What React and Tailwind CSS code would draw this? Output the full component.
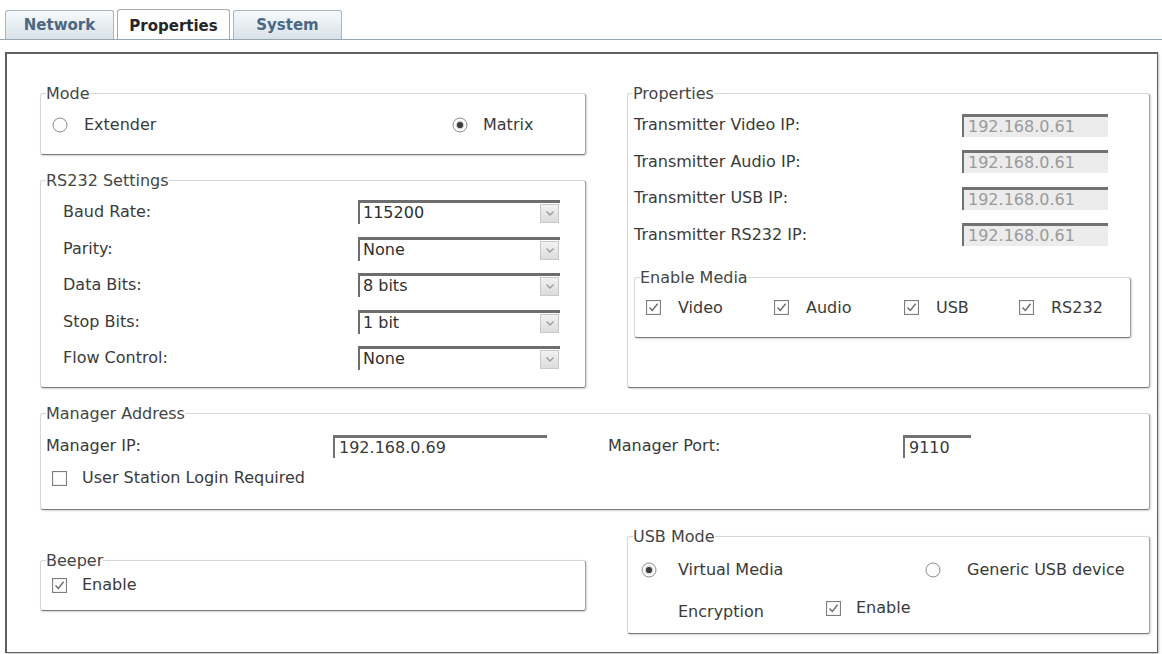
import React from "react";

const font = "font-['DejaVu_Sans',Verdana,sans-serif]";

function Group({ title, className = "", children }) {
  return (
    <fieldset
      className={`border border-[#d6d6d6] border-r-[#a2a2a2] border-b-[#7c7c7c] rounded-[3px] shadow-[1px_1px_2px_rgba(0,0,0,0.18)] ${className}`}
    >
      <legend className="ml-[5px] leading-[19px] text-[#454545]">{title}</legend>
      {children}
    </fieldset>
  );
}

function Radio({ checked }) {
  return (
    <svg width="16" height="16" viewBox="0 0 16 16" className="shrink-0">
      <circle cx="8" cy="8" r="7" fill="#fdfdfd" stroke="#8c8c8c" strokeWidth="1" />
      {checked && <circle cx="8" cy="8" r="4.4" fill="#d9d9d9" />}
      {checked && <circle cx="8" cy="8" r="3.1" fill="#3d3d3d" />}
    </svg>
  );
}

function Check({ checked }) {
  return (
    <svg width="15" height="15" viewBox="0 0 15 15" className="shrink-0">
      <rect x="0.5" y="0.5" width="14" height="14" fill="#fff" stroke="#7e7e7e" strokeWidth="1.2" />
      {checked && (
        <path d="M3.5 7.5 L6.3 10.5 L11.6 3.8" fill="none" stroke="#6a6a6a" strokeWidth="1.4" />
      )}
    </svg>
  );
}

function Select({ value }) {
  return (
    <div className="flex h-[24px] w-[202px] items-stretch border-t-[3px] border-l-2 border-[#6e6e6e] bg-white">
      <span className="flex-1 pl-[3px] leading-[20px] text-[#2f2f2f]">{value}</span>
      <span className="my-[1px] mr-[1px] flex w-[19px] items-center justify-center border border-[#c8c8c8] bg-linear-to-b from-[#f2f2f2] to-[#dcdcdc]">
        <svg width="10" height="7" viewBox="0 0 10 7">
          <path d="M1.5 1.5 L5 5 L8.5 1.5" fill="none" stroke="#9a9a9a" strokeWidth="1.3" />
        </svg>
      </span>
    </div>
  );
}

function IpBox({ value, className = "", muted }) {
  return (
    <div
      className={`h-[23px] border-t-[3px] border-l-2 border-[#727272] pl-[4px] leading-[20px] ${
        muted ? "bg-[#ececec] text-[#9a9a9a]" : "bg-white text-[#3a3a3a]"
      } ${className}`}
    >
      {value}
    </div>
  );
}

const rsRows = [
  ["Baud Rate:", "115200"],
  ["Parity:", "None"],
  ["Data Bits:", "8 bits"],
  ["Stop Bits:", "1 bit"],
  ["Flow Control:", "None"],
];

const txRows = ["Video", "Audio", "USB", "RS232"];

export default function App() {
  return (
    <div className={`${font} h-[654px] w-[1162px] overflow-hidden bg-white pt-[10px] text-[16px] text-[#3a3a3a]`}>
      {/* tab strip */}
      <div className="flex h-[30px] items-end gap-[3px] border-b border-[#97a6b0] pl-[5px]">
        <div className="flex h-[29px] w-[109px] items-center justify-center rounded-t-[3px] border border-b-0 border-[#a8b6bf] bg-linear-to-b from-[#f7fafc] to-[#d8e2e9] pt-[1px] text-[15px] font-bold text-[#4c6782]">
          Network
        </div>
        <div className="flex h-[30px] w-[113px] items-center justify-center rounded-t-[3px] border border-b-0 border-[#a9a9a9] bg-white pt-[3px] text-[15px] font-bold text-[#262626]">
          Properties
        </div>
        <div className="flex h-[29px] w-[109px] items-center justify-center rounded-t-[3px] border border-b-0 border-[#a8b6bf] bg-linear-to-b from-[#f7fafc] to-[#d8e2e9] pt-[1px] text-[15px] font-bold text-[#4c6782]">
          System
        </div>
      </div>

      {/* properties page */}
      <div className="ml-[5px] mt-[12px] h-[601px] w-[1153px] border-t-2 border-l-2 border-r border-b border-[#5f5f5f] pl-[33px] pr-[7px] pt-[30px] shadow-[1px_1px_2px_rgba(0,0,0,0.25)]">
        <div className="grid grid-cols-[546px_523px] gap-x-[41px]">
          <div className="flex flex-col gap-[16px]">
            <Group title="Mode" className="h-[71px]">
              <div className="grid grid-cols-[400px_auto] pl-[11px] pt-[12px]">
                <div className="flex h-[20px] items-center">
                  <Radio />
                  <span className="ml-[16px]">Extender</span>
                </div>
                <div className="flex h-[20px] items-center">
                  <Radio checked />
                  <span className="ml-[15px]">Matrix</span>
                </div>
              </div>
            </Group>

            <Group title="RS232 Settings" className="h-[217px]">
              <div className="flex flex-col gap-[12.5px] pl-[22px] pt-[10px]">
                {rsRows.map(([label, value]) => (
                  <div key={label} className="grid h-[24px] grid-cols-[295px_202px] items-center">
                    <span>{label}</span>
                    <Select value={value} />
                  </div>
                ))}
              </div>
            </Group>
          </div>

          <Group title="Properties" className="h-[304px]">
            <div className="pl-[6px] pt-[10px]">
              <div className="flex flex-col gap-[12.5px]">
                {txRows.map((name) => (
                  <div key={name} className="grid h-[24px] grid-cols-[328px_146px] items-center">
                    <span>Transmitter {name} IP:</span>
                    <IpBox value="192.168.0.61" muted />
                  </div>
                ))}
              </div>

              <Group title="Enable Media" className="mt-[21px] h-[70px] w-[497px]">
                <div className="grid grid-cols-[128px_130px_115px_auto] pl-[11px] pt-[12px]">
                  {txRows.map((name) => (
                    <div key={name} className="flex h-[18px] items-center">
                      <Check checked />
                      <span className="ml-[17px]">{name}</span>
                    </div>
                  ))}
                </div>
              </Group>
            </div>
          </Group>
        </div>

        <Group title="Manager Address" className="mt-[16px] h-[106px] w-[1110px]">
          <div className="pl-[5px] pt-[11px]">
            <div className="grid h-[22px] grid-cols-[287px_214px_61px_295px_68px] items-center">
              <span>Manager IP:</span>
              <IpBox value="192.168.0.69" className="h-[22px]" />
              <span />
              <span>Manager Port:</span>
              <IpBox value="9110" className="h-[22px]" />
            </div>
            <div className="mt-[13px] flex h-[18px] items-center pl-[6px]">
              <Check />
              <span className="ml-[15px]">User Station Login Required</span>
            </div>
          </div>
        </Group>

        <div className="mt-[17px] grid grid-cols-[546px_523px] items-start gap-x-[41px]">
          <Group title="Beeper" className="mt-[24px] h-[60px]">
            <div className="mt-[6px] flex h-[18px] items-center pl-[11px]">
              <Check checked />
              <span className="ml-[15px]">Enable</span>
            </div>
          </Group>

          <Group title="USB Mode" className="h-[107px]">
            <div className="pl-[13px] pt-[12px]">
              <div className="grid h-[20px] grid-cols-[284px_auto] items-center">
                <div className="flex items-center">
                  <Radio checked />
                  <span className="ml-[21px]">Virtual Media</span>
                </div>
                <div className="flex items-center">
                  <Radio />
                  <span className="ml-[26px]">Generic USB device</span>
                </div>
              </div>
              <div className="mt-[14px] grid h-[20px] grid-cols-[148px_auto] items-center pl-[37px]">
                <span className="pt-[8px]">Encryption</span>
                <div className="flex items-center">
                  <Check checked />
                  <span className="ml-[15px]">Enable</span>
                </div>
              </div>
            </div>
          </Group>
        </div>
      </div>
    </div>
  );
}
